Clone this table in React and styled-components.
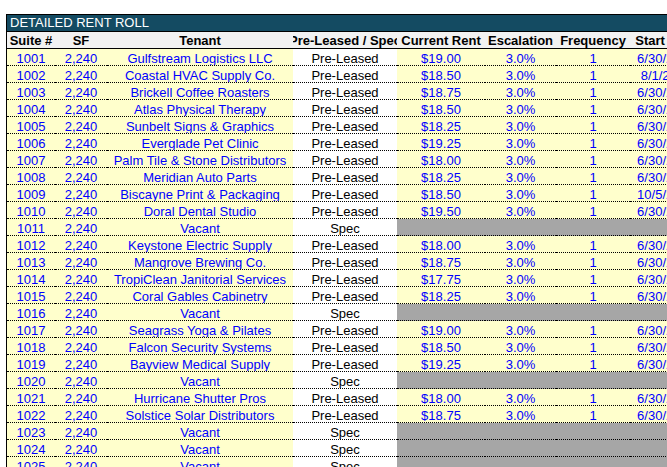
import React from "react";
import styled, { createGlobalStyle } from "styled-components";

const GlobalStyle = createGlobalStyle`
  html, body {
    margin: 0;
    padding: 0;
    overflow: hidden;
    background: #ffffff;
  }
  body {
    font-family: "Liberation Sans", Arial, sans-serif;
    font-size: 13px;
  }
`;

const columns = [
  { key: "suite", label: "Suite #", width: 48 },
  { key: "sf", label: "SF", width: 52 },
  { key: "tenant", label: "Tenant", width: 186 },
  { key: "status", label: "Pre-Leased / Spec", width: 104 },
  { key: "rent", label: "Current Rent", width: 88 },
  { key: "escalation", label: "Escalation", width: 71 },
  { key: "frequency", label: "Frequency", width: 74 },
  { key: "start", label: "Start Date", width: 72 },
];

const gridTemplate = columns.map((c) => `${c.width}px`).join(" ");

const leases = [
  ["1001", "Gulfstream Logistics LLC", "$19.00", "6/30/2025"],
  ["1002", "Coastal HVAC Supply Co.", "$18.50", "8/1/2025"],
  ["1003", "Brickell Coffee Roasters", "$18.75", "6/30/2025"],
  ["1004", "Atlas Physical Therapy", "$18.50", "6/30/2025"],
  ["1005", "Sunbelt Signs & Graphics", "$18.25", "6/30/2025"],
  ["1006", "Everglade Pet Clinic", "$19.25", "6/30/2025"],
  ["1007", "Palm Tile & Stone Distributors", "$18.00", "6/30/2025"],
  ["1008", "Meridian Auto Parts", "$18.25", "6/30/2025"],
  ["1009", "Biscayne Print & Packaging", "$18.50", "10/5/2025"],
  ["1010", "Doral Dental Studio", "$19.50", "6/30/2025"],
  ["1011", null],
  ["1012", "Keystone Electric Supply", "$18.00", "6/30/2025"],
  ["1013", "Mangrove Brewing Co.", "$18.75", "6/30/2025"],
  ["1014", "TropiClean Janitorial Services", "$17.75", "6/30/2025"],
  ["1015", "Coral Gables Cabinetry", "$18.25", "6/30/2025"],
  ["1016", null],
  ["1017", "Seagrass Yoga & Pilates", "$19.00", "6/30/2025"],
  ["1018", "Falcon Security Systems", "$18.50", "6/30/2025"],
  ["1019", "Bayview Medical Supply", "$19.25", "6/30/2025"],
  ["1020", null],
  ["1021", "Hurricane Shutter Pros", "$18.00", "6/30/2025"],
  ["1022", "Solstice Solar Distributors", "$18.75", "6/30/2025"],
  ["1023", null],
  ["1024", null],
  ["1025", null],
];

const fills = {
  input: "#ffffcc",
  plain: "#ffffff",
  blank: "#a6a6a6",
};

const Sheet = styled.div`
  margin: 14px 0 0 6px;
  border-left: 1px solid #000;
  width: ${columns.reduce((s, c) => s + c.width, 0)}px;
`;

const TitleBar = styled.div`
  height: 16px;
  line-height: 16px;
  padding-left: 3px;
  border-top: 1px solid #000;
  border-bottom: 1px solid #000;
  background: #144b62;
  color: #ffffff;
  white-space: nowrap;
`;

const HeaderRow = styled.div`
  display: grid;
  grid-template-columns: ${gridTemplate};
  border-bottom: 1px solid #000;
  background: #f2f2f2;
`;

const HeadCell = styled.div`
  display: flex;
  justify-content: center;
  overflow: hidden;
  white-space: nowrap;
  height: 15px;
  padding-top: 1px;
  line-height: 15px;
  font-weight: bold;
  color: #000;
`;

const Row = styled.div`
  display: grid;
  grid-template-columns: ${gridTemplate};
`;

const Cell = styled.div`
  display: flex;
  justify-content: center;
  overflow: hidden;
  white-space: nowrap;
  height: 13px;
  padding-top: 3px;
  line-height: 13px;
  border-bottom: 1px dotted #000;
  background: ${(p) => fills[p.$fill]};
  color: ${(p) => (p.$blue ? "#0000ff" : "#000000")};
`;

function LeaseRow({ suite, tenant, rent, start }) {
  const vacant = !tenant;
  return (
    <Row>
      <Cell $fill="input" $blue>{suite}</Cell>
      <Cell $fill="input" $blue>2,240</Cell>
      <Cell $fill="input" $blue>{vacant ? "Vacant" : tenant}</Cell>
      <Cell $fill="plain">{vacant ? "Spec" : "Pre-Leased"}</Cell>
      {vacant ? (
        <>
          <Cell $fill="blank" />
          <Cell $fill="blank" />
          <Cell $fill="blank" />
          <Cell $fill="blank" />
        </>
      ) : (
        <>
          <Cell $fill="input" $blue>{rent}</Cell>
          <Cell $fill="input" $blue>3.0%</Cell>
          <Cell $fill="input" $blue>1</Cell>
          <Cell $fill="input" $blue>{start}</Cell>
        </>
      )}
    </Row>
  );
}

export default function App() {
  return (
    <>
      <GlobalStyle />
      <Sheet>
        <TitleBar>DETAILED RENT ROLL</TitleBar>
        <HeaderRow>
          {columns.map((c) => (
            <HeadCell key={c.key}>{c.label}</HeadCell>
          ))}
        </HeaderRow>
        {leases.map(([suite, tenant, rent, start]) => (
          <LeaseRow
            key={suite}
            suite={suite}
            tenant={tenant}
            rent={rent}
            start={start}
          />
        ))}
      </Sheet>
    </>
  );
}
